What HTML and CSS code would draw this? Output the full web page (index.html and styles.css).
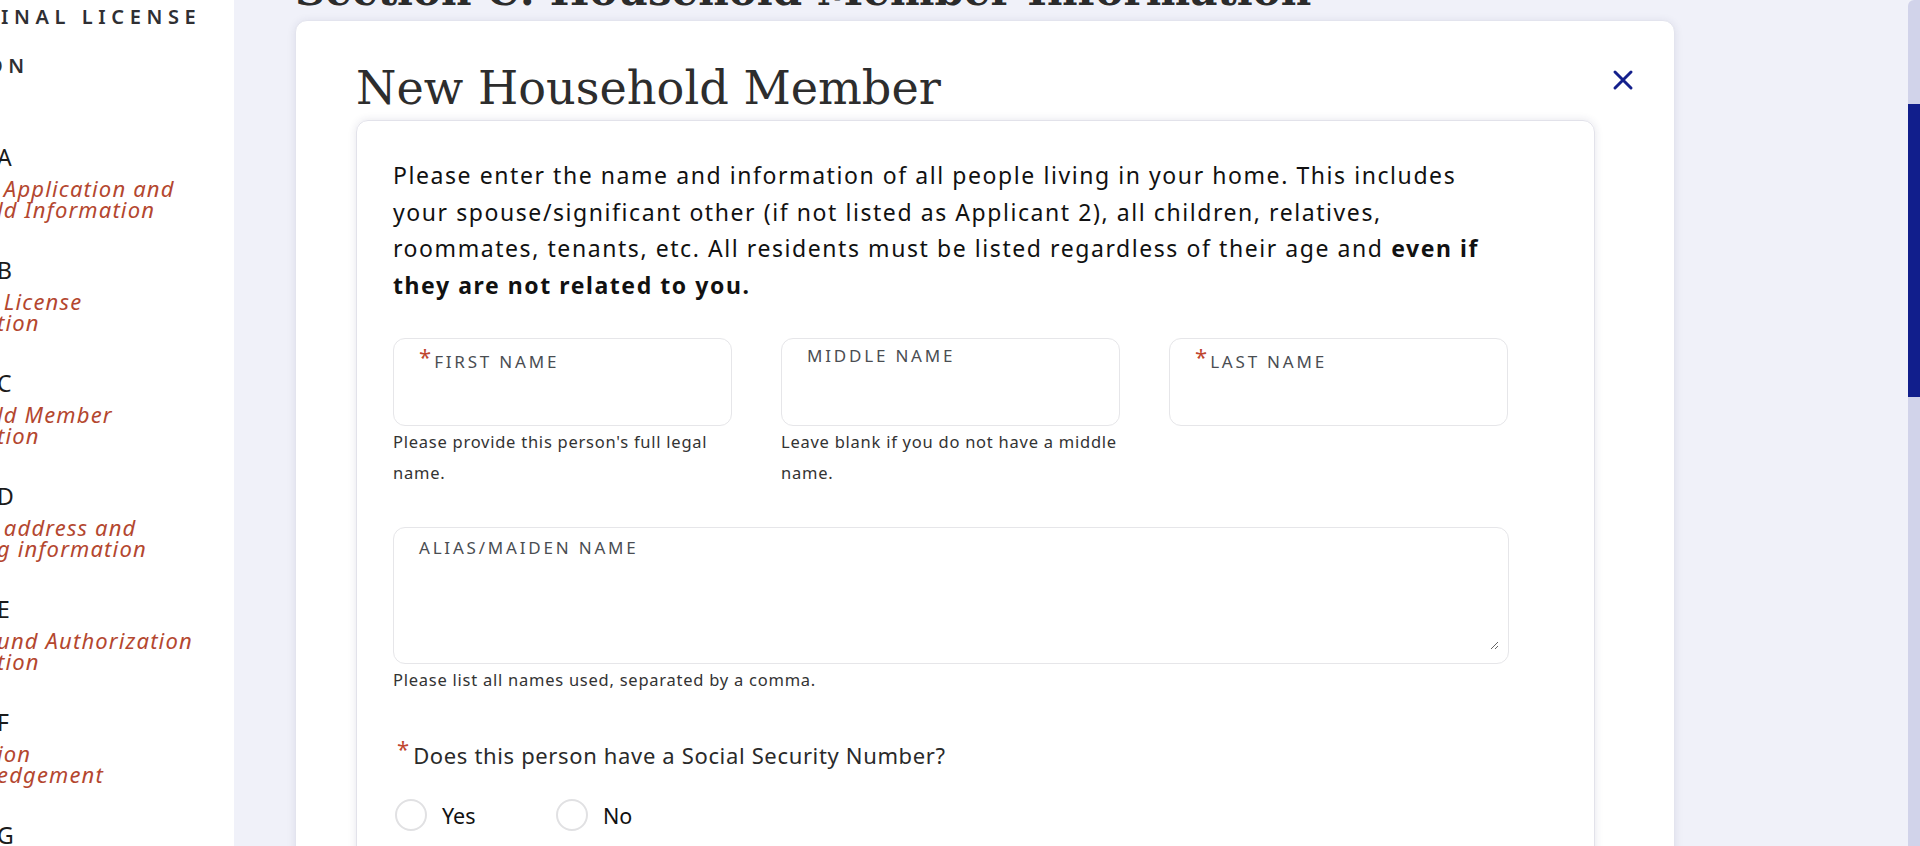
FILE: index.html
```html
<!DOCTYPE html>
<html lang="en">
<head>
<meta charset="utf-8">
<title>New Household Member</title>
<link rel="stylesheet" href="styles.css">
</head>
<body>
<div class="page">
  <nav class="sidebar">
    <div class="side-title"><span class="t1">INAL LICENSE</span><span class="t2">ON</span></div>
    <ul class="sections">
      <li class="sec"><div class="sec-letter">A</div><div class="sec-link">&nbsp;Application and<br>ld Information</div></li>
      <li class="sec"><div class="sec-letter">B</div><div class="sec-link">&nbsp;License<br>tion</div></li>
      <li class="sec"><div class="sec-letter">C</div><div class="sec-link">ld Member<br>tion</div></li>
      <li class="sec"><div class="sec-letter">D</div><div class="sec-link">&nbsp;address and<br>g information</div></li>
      <li class="sec"><div class="sec-letter">E</div><div class="sec-link">und Authorization<br>tion</div></li>
      <li class="sec"><div class="sec-letter">F</div><div class="sec-link">ion<br>edgement</div></li>
      <li class="sec"><div class="sec-letter">G</div></li>
    </ul>
  </nav>

  <main class="main">
    <h1 class="section-heading">Section C: Household Member Information</h1>
    <section class="modal">
      <header class="modal-head">
        <h2 class="modal-title">New Household Member</h2>
        <button class="close" aria-label="Close">
          <svg width="24" height="24" viewBox="0 0 24 24"><path d="M4 4 L20 20 M20 4 L4 20" stroke="#14208c" stroke-width="3" stroke-linecap="round" fill="none"/></svg>
        </button>
      </header>
      <div class="form-card">
        <p class="intro">Please enter the name and information of all people living in your home. This includes<br>your spouse/significant other (if not listed as Applicant 2), all children, relatives,<br>roommates, tenants, etc. All residents must be listed regardless of their age and <b>even if</b><br><b>they are not related to you.</b></p>

        <div class="name-row">
          <div class="field">
            <label class="box">
              <span class="lbl"><span class="ast">*</span><span class="lbl-text req">FIRST NAME</span></span>
              <input class="inp" type="text">
            </label>
            <div class="help">Please provide this person's full legal name.</div>
          </div>
          <div class="field">
            <label class="box">
              <span class="lbl"><span class="lbl-text">MIDDLE NAME</span></span>
              <input class="inp" type="text">
            </label>
            <div class="help">Leave blank if you do not have a middle name.</div>
          </div>
          <div class="field">
            <label class="box">
              <span class="lbl"><span class="ast">*</span><span class="lbl-text req">LAST NAME</span></span>
              <input class="inp" type="text">
            </label>
          </div>
        </div>

        <div class="field alias">
          <label class="box box-area">
            <span class="lbl lbl-area"><span class="lbl-text">ALIAS/MAIDEN NAME</span></span>
            <textarea class="area"></textarea>
          </label>
          <div class="help">Please list all names used, separated by a comma.</div>
        </div>

        <div class="question"><span class="ast q-ast">*</span><span class="q-text">Does this person have a Social Security Number?</span></div>
        <div class="radios">
          <label class="radio"><span class="circle"></span><span class="r-text">Yes</span></label>
          <label class="radio"><span class="circle"></span><span class="r-text">No</span></label>
        </div>
      </div>
    </section>
  </main>

  <div class="scrollbar"><div class="thumb"></div></div>
</div>
</body>
</html>
```

FILE: styles.css
```css
html, body {
  margin: 0;
  padding: 0;
  height: 846px;
  overflow: hidden;
}
body {
  background: #f0f1f9;
  font-family: "Noto Sans", "DejaVu Sans", sans-serif;
  color: #111;
}
.page {
  display: flex;
  height: 846px;
  overflow: hidden;
}

/* Sidebar */
.sidebar {
  flex: none;
  width: 234px;
  background: #fff;
  overflow: hidden;
}
.side-title {
  margin-top: -8px;
  font-size: 20px;
  font-weight: 600;
  letter-spacing: 5.6px;
  line-height: 49px;
  color: #2f2f33;
  white-space: nowrap;
}
.side-title .t1 {
  display: block;
  margin-left: 1px;
}
.side-title .t2 {
  display: block;
  margin-left: -13px;
}
.sections {
  list-style: none;
  margin: 52px 0 0 0;
  padding: 0;
}
.sec {
  margin: 0 0 35px -3px;
  white-space: nowrap;
}
.sec-letter {
  font-size: 23px;
  line-height: 30px;
  color: #1b1b1b;
}
.sec-link {
  margin-top: 6px;
  font-size: 22px;
  font-style: italic;
  line-height: 21px;
  letter-spacing: 1.15px;
  color: #b4472f;
}

/* Main */
.main {
  flex: 1;
  min-width: 0;
  padding-left: 61px;
  overflow: hidden;
}
.section-heading {
  margin: -30px 0 8px 0;
  font-family: "DejaVu Serif", serif;
  font-weight: bold;
  font-size: 42px;
  line-height: 42px;
  color: #2b2b2b;
  white-space: nowrap;
}
.modal {
  width: 1380px;
  box-sizing: border-box;
  background: #fff;
  border: 1px solid #e3e4ee;
  border-radius: 12px;
  box-shadow: 0 1px 8px rgba(40, 40, 90, 0.10);
  padding: 39px 79px 0 60px;
}
.modal-head {
  display: flex;
  justify-content: space-between;
  align-items: flex-start;
}
.modal-title {
  margin: 0;
  font-family: "DejaVu Serif", serif;
  font-weight: normal;
  font-size: 46.2px;
  line-height: 56px;
  color: #2d2d2d;
}
.close {
  margin: 8px -40px 0 0;
  padding: 0;
  border: 0;
  background: none;
  width: 24px;
  height: 24px;
  display: flex;
}
.form-card {
  margin-top: 4px;
  border: 1px solid #e2e2ea;
  border-radius: 12px;
  box-shadow: 0 0 8px rgba(40, 40, 90, 0.12);
  padding: 36px 0 120px 36px;
}
.intro {
  margin: 0;
  font-size: 23px;
  line-height: 36.5px;
  letter-spacing: 1.57px;
  color: #111;
  white-space: nowrap;
}
.intro b {
  font-weight: bold;
}

.name-row {
  margin-top: 35px;
  display: grid;
  grid-template-columns: 339px 339px 339px;
  column-gap: 49px;
}
.field {
  min-width: 0;
}
.box {
  display: flex;
  flex-direction: column;
  box-sizing: border-box;
  height: 88px;
  border: 1px solid #e6e6e9;
  border-radius: 12px;
  background: #fff;
}
.lbl {
  display: flex;
  align-items: flex-start;
  padding: 8px 0 0 25px;
}
.lbl-text {
  font-size: 17px;
  line-height: 18px;
  letter-spacing: 2.8px;
  color: #4a4d52;
}
.lbl-text.req {
  margin-top: 6px;
}
.ast {
  color: #c0462f;
  font-size: 22px;
  line-height: 18px;
  margin-right: 3px;
}
.inp {
  border: 0;
  outline: none;
  background: transparent;
  margin: 6px 20px 0 25px;
  font: inherit;
  height: 30px;
}
.help {
  font-size: 16.5px;
  line-height: 31px;
  letter-spacing: 0.75px;
  color: #333;
}

.alias {
  width: 1116px;
  margin-top: 39px;
}
.box-area {
  height: 137px;
  padding: 0 9px 13px 0;
}
.lbl-area {
  padding-top: 11px;
}
.area {
  flex: 1;
  border: 0;
  outline: none;
  background: transparent;
  resize: vertical;
  margin: 4px 0 0 25px;
  font: inherit;
}

.question {
  margin-top: 45px;
  display: flex;
  align-items: flex-start;
  padding-left: 4px;
}
.q-ast {
  margin-right: 4px;
  margin-top: -1px;
}
.q-text {
  font-size: 22px;
  line-height: 30px;
  letter-spacing: 0.65px;
  color: #2a2a2a;
}
.radios {
  margin-top: 28px;
  display: grid;
  grid-template-columns: 161px 161px;
  padding-left: 2px;
}
.radio {
  display: flex;
  align-items: center;
  height: 34px;
}
.circle {
  box-sizing: border-box;
  width: 32px;
  height: 32px;
  border: 2.5px solid #e1e1e3;
  border-radius: 50%;
  background: #fff;
}
.r-text {
  margin-left: 15px;
  font-size: 21.5px;
  color: #111;
}

/* Scrollbar */
.scrollbar {
  flex: none;
  width: 12px;
  background: #d1d3ea;
  border-top-left-radius: 6px;
}
.thumb {
  margin-top: 104px;
  height: 293px;
  background: #111e8c;
}
```
